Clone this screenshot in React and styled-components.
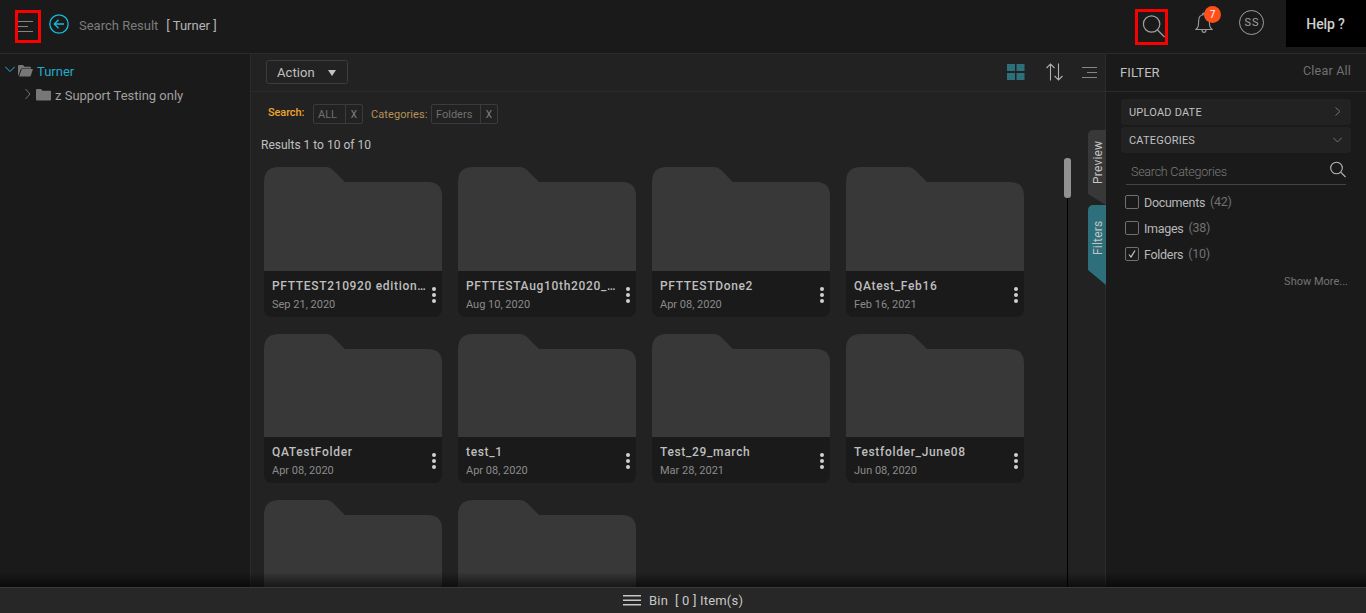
import React from "react";
import styled, { createGlobalStyle } from "styled-components";

const Global = createGlobalStyle`
  * { box-sizing: border-box; }
  body { margin: 0; background: #1a1a1a; color: #c8c8c8; font: 13px/16px Roboto, sans-serif; overflow: hidden; }
  button { font: inherit; color: inherit; background: none; border: 0; padding: 0; }
  svg { display: block; flex: none; }
`;

const Page = styled.div`
  height: 613px; display: flex; flex-direction: column; overflow: hidden;
`;
const Header = styled.header`
  height: 54px; flex: none; display: flex; align-items: flex-start;
  border-bottom: 1px solid #2b2b2b;
`;
const Highlight = styled.div`
  width: ${(p) => p.$w}px; height: ${(p) => p.$h}px; flex: none;
  margin: ${(p) => p.$top}px 0 0 ${(p) => p.$left}px;
  border: 3px solid #fb0000;
`;
const BackButton = styled.button`margin: 14px 0 0 8px;`;
const Title = styled.span`margin: 18px 0 0 10px; color: #7c7c7c; line-height: 16px; white-space: pre;`;
const Scope = styled.span`margin: 18px 0 0 8px; color: #b4b4b4; line-height: 16px; white-space: pre;`;
const Spacer = styled.div`flex: 1;`;
const Bell = styled.div`position: relative; margin: 12px 0 0 27px; width: 18px;`;
const Badge = styled.span`
  position: absolute; left: 9px; top: -6px; width: 17px; height: 17px; border-radius: 50%;
  background: #ff4f1b; color: #fff; font-size: 10px; line-height: 17px; text-align: center;
`;
const Avatar = styled.div`
  margin: 10px 22px 0 26px; width: 25px; height: 25px; border: 1px solid #a0a0a0; border-radius: 50%;
  font-size: 11px; line-height: 23px; text-align: center; letter-spacing: 1px; padding-left: 1px; color: #a0a0a0;
`;
const Help = styled.button`
  width: 80px; height: 47px; padding: 1px 1px 0 0; background: #000; font-weight: 500; font-size: 14px;
  letter-spacing: -.15px; color: #d0d0d0;
`;
const Body = styled.div`flex: 1; min-height: 0; display: flex; position: relative;`;
const Fade = styled.div`
  position: absolute; left: 0; right: 0; bottom: 0; height: 15px;
  background: linear-gradient(rgba(0,0,0,0), rgba(0,0,0,.6));
`;
const Sidebar = styled.nav`width: 251px; flex: none; border-right: 1px solid #2b2b2b; padding-top: 6px;`;
const TreeRow = styled.div`
  height: 24px; display: flex; align-items: center; padding-left: ${(p) => p.$indent}px;
  color: ${(p) => (p.$active ? "#21acc9" : "#a0a0a0")};
`;
const TreeIcon = styled.span`margin: -${(p) => p.$lift || 2}px 0 0 ${(p) => p.$gap || 0}px;`;
const TreeLabel = styled.span`margin-left: 4px; white-space: nowrap;`;
const Main = styled.main`
  width: 855px; flex: none; background: #222; border-right: 1px solid #2d2d2d;
  display: flex; flex-direction: column;
`;
const Toolbar = styled.div`
  height: 38px; flex: none; border-bottom: 1px solid #2b2b2b; display: flex; align-items: flex-start;
  padding: 6px 8px 0 15px;
`;
const ActionButton = styled.button`
  width: 82px; height: 24px; border: 1px solid #3d3d3d; border-radius: 3px; display: flex; align-items: center;
  padding: 1px 11px 0 10px; justify-content: space-between; letter-spacing: .1px; color: #c0c0c0;
`;
const Tool = styled.div`margin: ${(p) => p.$top}px 0 0 ${(p) => p.$gap}px;`;
const Content = styled.div`flex: 1; min-height: 0; display: flex;`;
const Results = styled.section`width: 813px; flex: none; overflow: hidden;`;
const Chips = styled.div`display: flex; align-items: flex-start; height: 32px; padding: 12px 0 0 17px; font-size: 11px; line-height: 18px;`;
const ChipLabel = styled.span`
  width: ${(p) => p.$w}px; margin-top: ${(p) => p.$top}px; color: ${(p) => p.$color};
  font-weight: ${(p) => p.$weight || 400}; letter-spacing: ${(p) => p.$track || 0}px; white-space: nowrap;
`;
const Chip = styled.div`
  width: ${(p) => p.$w}px; height: 20px; display: flex; margin-right: 8px; border: 1px solid #3b3b3b;
  border-radius: 2px; color: #707070; line-height: 19px;
`;
const ChipText = styled.span`flex: 1; padding-left: 4px;`;
const ChipClose = styled.span`width: 17px; border-left: 1px solid #3b3b3b; color: #808080; font-size: 10px; text-align: center;`;
const Count = styled.div`margin: 13px 0 0 10px; font-size: 12px; line-height: 16px; color: #c0c0c0;`;
const Grid = styled.div`
  margin: 14px 0 0 13px; display: grid; grid-template-columns: repeat(4, 178px);
  column-gap: 16px; grid-template-rows: 151px 150px 150px; row-gap: 16px;
`;
const Card = styled.article`display: flex; flex-direction: column;`;
const CardInfo = styled.div`
  height: 46px; background: #1a1a1a; border-radius: 0 0 8px 8px; display: flex;
  justify-content: space-between; padding: 7px 6px 0 8px;
`;
const Name = styled.div`
  width: 156px; font-size: 12px; font-weight: 500; letter-spacing: .67px; line-height: 16px;
  color: #bebebe; white-space: nowrap;
`;
const Stamp = styled.div`font-size: 11px; line-height: 16px; margin-top: 3px; color: #8b8b8b;`;
const Dots = styled.div`display: flex; flex-direction: column; gap: 2px; padding-top: 9px;`;
const Dot = styled.i`width: 4px; height: 4px; border-radius: 50%; background: #d0d0d0;`;
const Scroll = styled.div`width: 7px; margin-top: 66px; display: flex; flex-direction: column; align-items: center;`;
const Thumb = styled.div`width: 7px; height: 40px; border-radius: 3px; background: #929292; flex: none;`;
const Track = styled.div`width: 1px; flex: 1; background: #000;`;
const Tabs = styled.div`margin: 38px 0 0 17px; width: 18px; display: flex; flex-direction: column;`;
const Tab = styled.div`
  height: ${(p) => p.$h}px; width: 18px; background: ${(p) => p.$bg}; color: #c4c4c4;
  writing-mode: vertical-rl; transform: rotate(180deg);
  border-radius: 0 0 5px 0; clip-path: polygon(0 0, 100% ${(p) => p.$cut}px, 100% 100%, 0 100%);
  font-size: 12px; line-height: 16px; letter-spacing: .2px; padding: ${(p) => p.$pad}px 2px 0 0;
`;
const Filters = styled.aside`flex: 1; min-width: 0;`;
const FilterHead = styled.div`
  height: 38px; border-bottom: 1px solid #2b2b2b; display: flex; justify-content: space-between;
  padding: 11px 15px 0 14px; color: #c0c0c0; letter-spacing: .1px;
`;
const ClearAll = styled.span`color: #717171; font-size: 12.5px; margin-top: -2px; letter-spacing: .2px;`;
const FilterBody = styled.div`padding: 7px 15px 0;`;
const Accordion = styled.div`
  height: 26px; margin-bottom: 2px; background: #222; border-radius: 3px; display: flex; align-items: center;
  justify-content: space-between; padding: 0 9px 0 8px; font-size: 11px; color: #c0c0c0; letter-spacing: .2px;
`;
const AccordionLabel = styled.span`padding-top: 1px;`;
const SearchField = styled.div`
  margin: 2px 5px 0; height: 30px; border-bottom: 1px solid #444; display: flex; justify-content: space-between;
  padding: 6px 0 0 5px; font-size: 12.5px; line-height: 18px; font-weight: 300; letter-spacing: -.25px; color: #7a7a7a;
`;
const Placeholder = styled.span`padding-top: 2px;`;
const Options = styled.div`padding: 4px 4px 0;`;
const Option = styled.div`
  height: 26px; display: flex; align-items: center; font-size: 12.5px; letter-spacing: -.3px; color: #b8b8b8;
`;
const Check = styled.span`
  width: 14px; height: 14px; border: 1px solid #707070; border-radius: 2px; margin-right: 5px;
  display: flex; align-items: center; justify-content: center;
`;
const OptionLabel = styled.span`padding-top: 1px;`;
const Qty = styled.span`color: #717171; margin-left: 5px;`;
const ShowMore = styled.div`margin: 7px 3px 0; text-align: right; font-size: 11px; line-height: 16px; color: #747474;`;
const Bin = styled.footer`
  height: 26px; flex: none; background: #272727; border-top: 1px solid #3a3a3a; display: flex; align-items: center;
  padding-left: 623px; color: #c8c8c8; white-space: pre; font-size: 13px; letter-spacing: .2px;
`;
const BinText = styled.span`margin-left: 8px;`;

const Chevron = ({ d, w, h, color = "#737373" }) => (
  <svg width={w} height={h} fill="none" stroke={color} strokeWidth="1"><path d={d} /></svg>
);
const FolderArt = ({ height }) => (
  <svg width="178" height={height} viewBox={`0 0 178 ${height}`}><path fill="#383838" d="M0 104V15Q0 0 15 0H62Q66 0 69 3L81 15H164Q178 15 178 29V104Z" /></svg>
);

const FOLDERS = [
  ["PFTTEST210920 edition…", "Sep 21, 2020"],
  ["PFTTESTAug10th2020_…", "Aug 10, 2020"],
  ["PFTTESTDone2", "Apr 08, 2020"],
  ["QAtest_Feb16", "Feb 16, 2021"],
  ["QATestFolder", "Apr 08, 2020"],
  ["test_1", "Apr 08, 2020"],
  ["Test_29_march", "Mar 28, 2021"],
  ["Testfolder_June08", "Jun 08, 2020"],
  null,
  null,
];
const CATEGORIES = [["Documents", 42], ["Images", 38], ["Folders", 10, true]];

export default function App() {
  return (
    <Page>
      <Global />
      <Header>
        <Highlight $w={26} $h={33} $top={10} $left={15}>
          <svg width="16" height="27" stroke="#858585"><path d="M0 8.5H15M0 13.5H10M0 18.5H15" /></svg>
        </Highlight>
        <BackButton>
          <svg width="20" height="20" fill="none" stroke="#16bddb" strokeWidth="1.3"><circle cx="10" cy="10" r="9.2" /><path d="M15 10H5.5M9.5 5.7L5.3 10L9.5 14.3" /></svg>
        </BackButton>
        <Title>Search Result</Title>
        <Scope>[ Turner ]</Scope>
        <Spacer />
        <Highlight $w={33} $h={36} $top={9} $left={0}>
          <svg width="27" height="30" fill="none" stroke="#a0a0a0" strokeWidth="1.2"><circle cx="13.6" cy="12" r="8.2" /><path d="M19.5 18L26.5 25" /></svg>
        </Highlight>
        <Bell>
          <svg width="18" height="22" fill="none" stroke="#9a9a9a" strokeWidth="1.1">
            <path d="M1 17.5C3.5 15 3.5 13.5 3.7 8.5C3.8 4.8 6 2.8 9 2.8S14.2 4.8 14.3 8.5C14.5 13.5 14.5 15 17 17.5ZM7.5 2.8V1.8Q9 .5 10.5 1.8V2.8M7 17.7Q7 20.4 9 20.4T11 17.7" />
          </svg>
          <Badge>7</Badge>
        </Bell>
        <Avatar>SS</Avatar>
        <Help>Help ?</Help>
      </Header>
      <Body>
        <Sidebar>
          <TreeRow $indent={5} $active>
            <TreeIcon $lift={5}><Chevron w={10} h={7} d="M0 .5L5 5.5L10 .5" color="#21b6d2" /></TreeIcon>
            <TreeIcon $gap={3}><svg width="15" height="12" fill="#777"><path d="M0 1Q0 0 1 0H5L6.5 1.7H12Q13 1.7 13 2.7V3.4H4.2Q3 3.4 2.6 4.4L.5 10.5Q0 10.5 0 9.5ZM3.8 4.1H15L12.8 10.8Q12.5 11.5 11.8 11.5H1.1Z" /></svg></TreeIcon>
            <TreeLabel>Turner</TreeLabel>
          </TreeRow>
          <TreeRow $indent={25}>
            <TreeIcon $lift={4}><Chevron w={6} h={10} d="M.5 0L5 5L.5 10" /></TreeIcon>
            <TreeIcon $gap={5}><svg width="15" height="12" fill="#777"><path d="M0 1Q0 0 1 0H5L6.5 1.7H14Q15 1.7 15 2.7V10.5Q15 11.5 14 11.5H1Q0 11.5 0 10.5Z" /></svg></TreeIcon>
            <TreeLabel>z Support Testing only</TreeLabel>
          </TreeRow>
        </Sidebar>
        <Main>
          <Toolbar>
            <ActionButton>Action<svg width="8" height="6" fill="#c4c4c4"><path d="M0 0H8L4 6Z" /></svg></ActionButton>
            <Spacer />
            <Tool $top={4} $gap={0}><svg width="18" height="17" fill="#2d6f7b"><path d="M0 0H8V7H0ZM9.5 0H17.5V7H9.5ZM0 9H8V16H0ZM9.5 9H17.5V16H9.5Z" /></svg></Tool>
            <Tool $top={3} $gap={21}><svg width="18" height="18" fill="none" stroke="#b0b0b0" strokeWidth="1.1"><path d="M4.5 17.5V1M.5 5L4.5 1L8.5 5M12.5 .5V17M8.5 13L12.5 17L16.5 13" /></svg></Tool>
            <Tool $top={6} $gap={18}><svg width="15" height="13" stroke="#858585"><path d="M0 1.5H15M5 6.5H15M0 11.5H15" /></svg></Tool>
          </Toolbar>
          <Content>
            <Results>
              <Chips>
                <ChipLabel $w={45} $top={0} $color="#eda52f" $weight={500} $track={-0.1}>Search:</ChipLabel>
                <Chip $w={50}><ChipText>ALL</ChipText><ChipClose>X</ChipClose></Chip>
                <ChipLabel $w={60} $top={2} $color="#b69359" $track={0.08}>Categories:</ChipLabel>
                <Chip $w={67}><ChipText>Folders</ChipText><ChipClose>X</ChipClose></Chip>
              </Chips>
              <Count>Results 1 to 10 of 10</Count>
              <Grid>
                {FOLDERS.map((f, i) => (
                  <Card key={i}>
                    <FolderArt height={i > 3 && i < 8 ? 103 : 104} />
                    {f && (
                      <CardInfo>
                        <div><Name>{f[0]}</Name><Stamp>{f[1]}</Stamp></div>
                        <Dots><Dot /><Dot /><Dot /></Dots>
                      </CardInfo>
                    )}
                  </Card>
                ))}
              </Grid>
            </Results>
            <Scroll><Thumb /><Track /></Scroll>
            <Tabs>
              <Tab $h={75} $bg="#383838" $cut={11} $pad={21}>Preview</Tab>
              <Tab $h={80} $bg="#2d6f7b" $cut={15} $pad={30}>Filters</Tab>
            </Tabs>
          </Content>
        </Main>
        <Filters>
          <FilterHead>FILTER<ClearAll>Clear All</ClearAll></FilterHead>
          <FilterBody>
            <Accordion><AccordionLabel>UPLOAD DATE</AccordionLabel><Chevron w={7} h={10} d="M.5 .5L5 4.5L.5 8.5" /></Accordion>
            <Accordion><AccordionLabel>CATEGORIES</AccordionLabel><Chevron w={9} h={7} d="M0 .5L4.5 5L9 .5" /></Accordion>
            <SearchField><Placeholder>Search Categories</Placeholder><svg width="16" height="17" fill="none" stroke="#b8b8b8" strokeWidth="1.1"><circle cx="6.5" cy="7" r="5.8" /><path d="M10.7 11.2L15.5 16" /></svg></SearchField>
            <Options>
              {CATEGORIES.map(([label, n, on]) => (
                <Option key={label}>
                  <Check>{on && <svg width="8" height="8" fill="none" stroke="#c8c8c8" strokeWidth="1.2"><path d="M1 4.5L3 7L7 .5" /></svg>}</Check>
                  <OptionLabel>{label}</OptionLabel><Qty>({n})</Qty>
                </Option>
              ))}
            </Options>
            <ShowMore>Show More...</ShowMore>
          </FilterBody>
        </Filters>
        <Fade />
      </Body>
      <Bin>
        <svg width="18" height="11" fill="#c8c8c8"><path d="M0 0H18V1.5H0ZM0 4.5H18V6H0ZM0 9H18V10.5H0Z" /></svg>
        <BinText>Bin  [ 0 ] Item(s)</BinText>
      </Bin>
    </Page>
  );
}
